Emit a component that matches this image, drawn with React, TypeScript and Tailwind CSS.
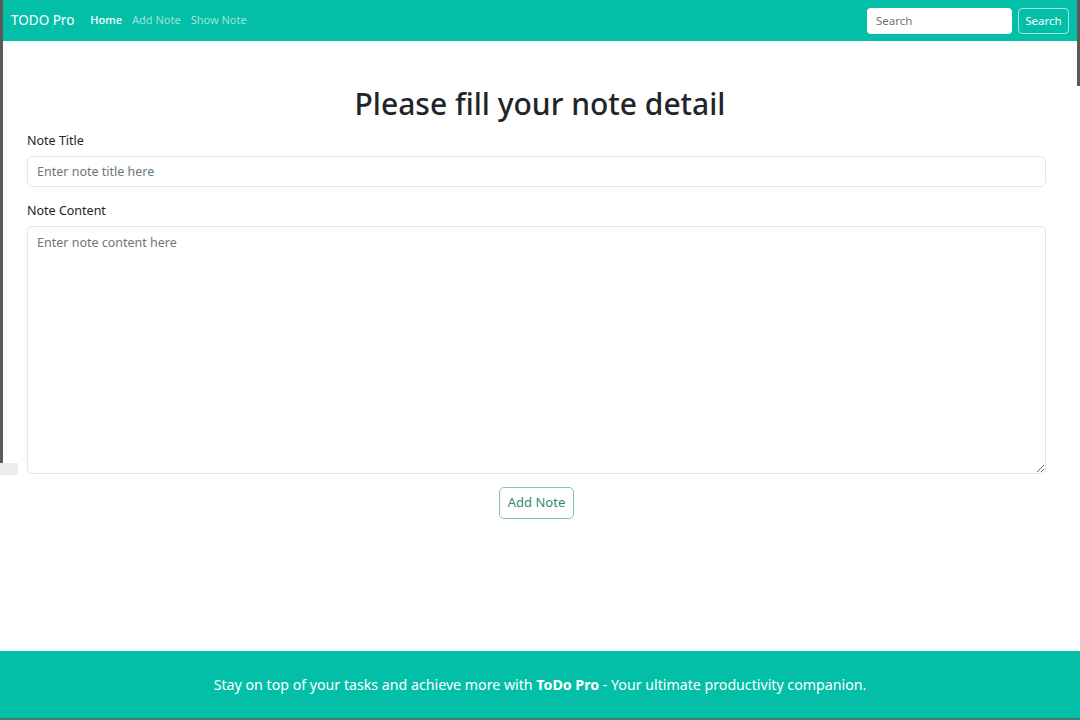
import { useState } from "react";

const links = [
  { label: "Home", active: true },
  { label: "Add Note", active: false },
  { label: "Show Note", active: false },
];

export default function App() {
  const [title, setTitle] = useState("");
  const [content, setContent] = useState("");

  return (
    <div className="relative flex min-h-[720px] flex-col bg-white font-['Noto_Sans',sans-serif] text-[#212529]">
      {/* screenshot frame edges */}
      <div className="absolute left-0 top-0 h-[463px] w-[3px] bg-[#5a5a5a]" />
      <div className="absolute left-0 top-[463px] h-[12px] w-[18px] bg-[#ececec]" />
      <div className="absolute right-0 top-0 h-[86px] w-[3px] bg-[#5a5a5a]" />

      <nav className="flex h-[41px] items-center bg-[#03bfa7] pl-[11px] pr-[11px]">
        <span className="text-[13.5px] text-white">TODO Pro</span>
        <ul className="ml-[16px] flex items-center gap-[10px]">
          {links.map((link) => (
            <li
              key={link.label}
              className={
                link.active
                  ? "text-[11px] font-medium text-white"
                  : "text-[11px] text-white/60"
              }
            >
              {link.label}
            </li>
          ))}
        </ul>
        <form className="ml-auto flex items-center gap-[6px]">
          <input
            type="search"
            placeholder="Search"
            className="h-[26px] w-[145px] rounded-[4px] bg-white px-[9px] text-[11.5px] text-[#212529] outline-none placeholder:text-[#6c757d]"
          />
          <button
            type="button"
            className="h-[26px] w-[51px] rounded-[4px] border border-white/60 text-[11.5px] text-white"
          >
            Search
          </button>
        </form>
      </nav>

      <main className="flex flex-1 flex-col px-[27px] pt-[42px]">
        <h1 className="text-center text-[30px] font-medium leading-[42px]">
          Please fill your note detail
        </h1>
        <label className="mt-[7px] text-[12.5px] leading-[18px]">Note Title</label>
        <input
          value={title}
          onChange={(e) => setTitle(e.target.value)}
          placeholder="Enter note title here"
          className="mt-[6px] h-[31px] w-[1019px] rounded-[5px] border border-[#e4e6e8] px-[9px] text-[12.5px] outline-none placeholder:text-[#6c757d]"
        />
        <label className="mt-[15px] text-[12.5px] leading-[18px]">Note Content</label>
        <textarea
          value={content}
          onChange={(e) => setContent(e.target.value)}
          placeholder="Enter note content here"
          className="mt-[6px] h-[248px] w-[1019px] rounded-[5px] border border-[#e4e6e8] px-[9px] py-[7px] text-[12.5px] outline-none placeholder:text-[#6c757d]"
        />
        <div className="mt-[13px] flex w-[1019px] justify-center">
          <button
            type="button"
            className="h-[32px] w-[75px] rounded-[5px] border border-[#7fc8b3] text-[13px] text-[#2f8c6b]"
          >
            Add Note
          </button>
        </div>
      </main>

      <footer className="flex h-[69px] items-center justify-center border-b-2 border-[#3f7f70] bg-[#03bfa7] text-[14.2px] text-white">
        <p>
          Stay on top of your tasks and achieve more with{" "}
          <span className="font-bold">ToDo Pro</span> - Your ultimate
          productivity companion.
        </p>
      </footer>
    </div>
  );
}
